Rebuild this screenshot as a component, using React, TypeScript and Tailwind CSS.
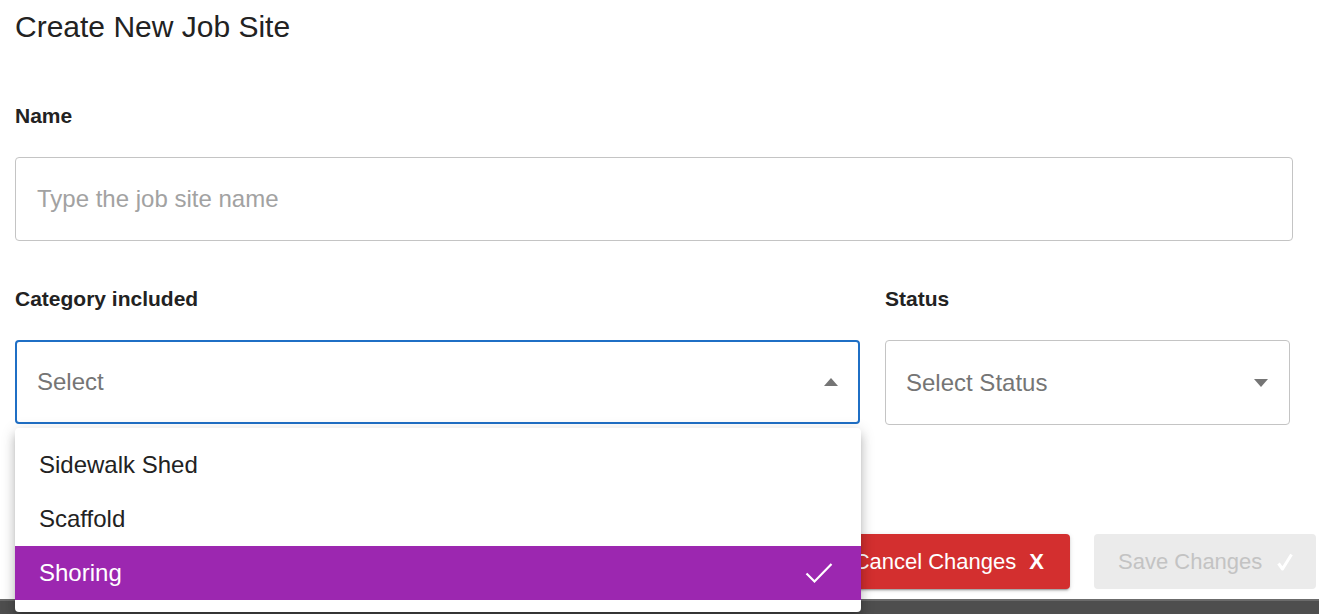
import React from "react";

const categories = ["Sidewalk Shed", "Scaffold", "Shoring"];
const selected = "Shoring";

// small triangle used by the select boxes
const Caret: React.FC<{ up?: boolean }> = ({ up }) => (
  <svg width="14" height="8" viewBox="0 0 14 8" className="shrink-0">
    <path d={up ? "M0 8 L7 0 L14 8 Z" : "M0 0 L7 8 L14 0 Z"} fill="#757575" />
  </svg>
);

export default function App() {
  return (
    <div className="relative h-[614px] w-[1319px] overflow-hidden bg-white font-['Liberation_Sans',Arial,sans-serif] text-[#222]">
      <div className="pl-[15px] pt-[12px]">
        <h1 className="text-[30px] leading-[30px] font-normal">Create New Job Site</h1>

        {/* Name */}
        <label className="mt-[63px] block text-[21px] leading-[21px] font-bold">Name</label>
        <div className="mt-[31px] flex h-[84px] w-[1278px] items-center rounded-[4px] border border-[#c4c4c4] px-[21px]">
          <span className="text-[24px] text-[#a2a2a2]">Type the job site name</span>
        </div>

        {/* Category + Status */}
        <div className="mt-[47px] grid grid-cols-[845px_405px] gap-x-[25px]">
          <label className="block text-[21px] leading-[21px] font-bold">Category included</label>
          <label className="block text-[21px] leading-[21px] font-bold">Status</label>

          <div className="relative mt-[31px]">
            <div className="flex h-[84px] items-center justify-between rounded-[4px] border-2 border-[#1f6fc5] pl-[20px] pr-[20px]">
              <span className="text-[24px] text-[#757575]">Select</span>
              <Caret up />
            </div>

            {/* open dropdown */}
            <div className="absolute left-0 top-[88px] z-20 w-[846px] rounded-[4px] bg-white pt-[10px] pb-[12px] shadow-[0_5px_5px_-3px_rgba(0,0,0,0.2),0_8px_10px_1px_rgba(0,0,0,0.14),0_3px_14px_2px_rgba(0,0,0,0.12)]">
              {categories.map((c) => (
                <div
                  key={c}
                  className={`flex h-[54px] items-center justify-between pl-[24px] pr-[28px] text-[24px] ${
                    c === selected ? "bg-[#9c27b0] text-white" : "text-[#222]"
                  }`}
                >
                  <span>{c}</span>
                  {c === selected && (
                    <svg width="28" height="24" viewBox="0 0 28 24" fill="none">
                      <path d="M1.5 12.5 L9.5 20.5 L26.5 3" stroke="white" strokeWidth="2.2" />
                    </svg>
                  )}
                </div>
              ))}
            </div>
          </div>

          <div className="mt-[31px] flex h-[85px] items-center justify-between rounded-[4px] border border-[#c4c4c4] pl-[20px] pr-[21px]">
            <span className="text-[24px] text-[#757575]">Select Status</span>
            <Caret />
          </div>
        </div>

        {/* Buttons */}
        <div className="mt-[109px] flex justify-end gap-[24px] pr-[3px]">
          <button className="flex h-[55px] items-center gap-[13px] rounded-[4px] bg-[#d32f2f] pl-[24px] pr-[26px] text-[22px] text-white shadow-[0_3px_1px_-2px_rgba(0,0,0,0.2),0_2px_2px_0_rgba(0,0,0,0.14),0_1px_5px_0_rgba(0,0,0,0.12)]">
            <span>Cancel Changes</span>
            <span className="text-[22px] font-bold">X</span>
          </button>
          <button className="flex h-[55px] w-[222px] items-center gap-[15px] rounded-[4px] bg-[#ebebeb] pl-[24px] text-[22px] text-[#c3c3c3]">
            <span>Save Changes</span>
            <svg width="16" height="18" viewBox="0 0 16 18" fill="none">
              <path d="M1.5 10.5 L5.5 16 L14.5 1.5" stroke="white" strokeWidth="3" strokeLinejoin="round" />
            </svg>
          </button>
        </div>
      </div>

      {/* bottom bar */}
      <div className="absolute bottom-0 left-0 h-[15px] w-full border-t-[2px] border-[#6b6b6b] bg-[#4e4e4e]" />
    </div>
  );
}
